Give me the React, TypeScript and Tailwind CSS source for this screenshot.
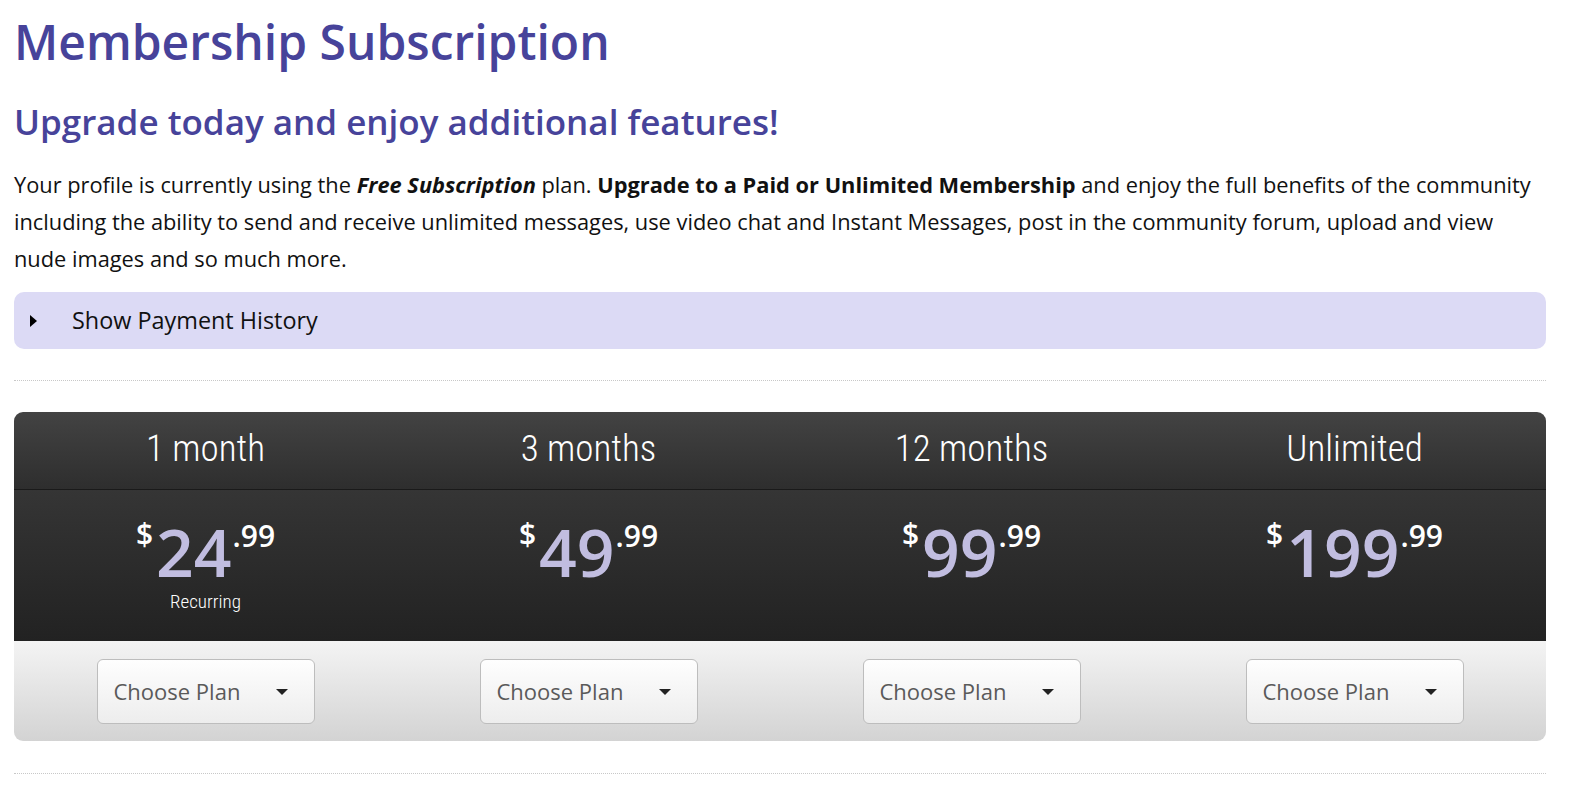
interface Plan {
  id: string;
  label: string;
  dollars: string;
  cents: string;
  note?: string;
}

const plans: Plan[] = [
  { id: "1m", label: "1 month", dollars: "24", cents: ".99", note: "Recurring" },
  { id: "3m", label: "3 months", dollars: "49", cents: ".99" },
  { id: "12m", label: "12 months", dollars: "99", cents: ".99" },
  { id: "unl", label: "Unlimited", dollars: "199", cents: ".99" },
];

const narrow = { fontFamily: "'Liberation Sans Narrow', 'Roboto Condensed', 'Open Sans', sans-serif", fontStretch: "condensed", fontWeight: 300 } as const;

const App = () => {
  return (
    <div className="bg-white text-[#111] pl-[14px] pr-[25px] pt-[14px] pb-[30px]" style={{ fontFamily: "'Open Sans', sans-serif" }}>
      <h1 className="text-[48px] leading-[56px] font-semibold text-[#47439a]">Membership Subscription</h1>
      <h2 className="mt-[30px] text-[35px] leading-[44px] font-semibold text-[#47439a]">Upgrade today and enjoy additional features!</h2>
      <p className="mt-[22px] text-[21.8px] leading-[37px] pr-[3px]">
        Your profile is currently using the <b><i>Free Subscription</i></b> plan. <b>Upgrade to a Paid or Unlimited Membership</b> and enjoy the full benefits of the community including the ability to send and receive unlimited messages, use video chat and Instant Messages, post in the community forum, upload and view nude images and so much more.
      </p>

      <div className="mt-[15px] h-[57px] rounded-[10px] bg-[#dcdaf5] flex items-center pl-[16px]">
        <span className="w-0 h-0 border-y-[6px] border-y-transparent border-l-[7px] border-l-black" />
        <span className="ml-[35px] text-[23.4px] text-[#111]">Show Payment History</span>
      </div>

      <div className="mt-[31px] border-t border-dotted border-[#c8c8c8]" />

      <div className="mt-[31px] rounded-[9px] overflow-hidden">
        <div className="grid grid-cols-4 h-[78px] bg-gradient-to-b from-[#434343] to-[#2e2e2e] border-b border-[#1a1a1a]">
          {plans.map((p) => (
            <div key={p.id} className="flex items-center justify-center text-white text-[37px] pb-[4px]" style={narrow}>{p.label}</div>
          ))}
        </div>
        <div className="grid grid-cols-4 h-[151px] bg-gradient-to-b from-[#353535] to-[#222]">
          {plans.map((p) => (
            <div key={p.id} className="flex flex-col items-center pt-[28px]">
              <div className="flex items-start leading-none">
                <span className="mt-[1px] mr-[3px] text-[30px] font-semibold text-white">$</span>
                <span className="text-[66px] font-semibold text-[#c1bde0]">{p.dollars}</span>
                <span className="mt-[3px] ml-[1px] text-[30px] font-semibold text-white">{p.cents}</span>
              </div>
              {p.note && <div className="mt-[6px] text-[19px] leading-[24px] text-white" style={narrow}>{p.note}</div>}
            </div>
          ))}
        </div>
        <div className="grid grid-cols-4 h-[100px] bg-gradient-to-b from-[#f4f4f4] to-[#d3d3d3] pt-[18px]">
          {plans.map((p) => (
            <div key={p.id} className="flex justify-center">
              <button className="w-[218px] h-[65px] rounded-[6px] border border-[#bdbdbd] bg-gradient-to-b from-[#fefefe] to-[#ededed] flex items-center pl-[16px] pr-[26px] text-[22px] text-[#5a5a5a]">
                <span>Choose Plan</span>
                <span className="ml-auto w-0 h-0 border-x-[6px] border-x-transparent border-t-[6px] border-t-[#222]" />
              </button>
            </div>
          ))}
        </div>
      </div>

      <div className="mt-[32px] border-t border-dotted border-[#c8c8c8]" />
    </div>
  );
};

export default App;
